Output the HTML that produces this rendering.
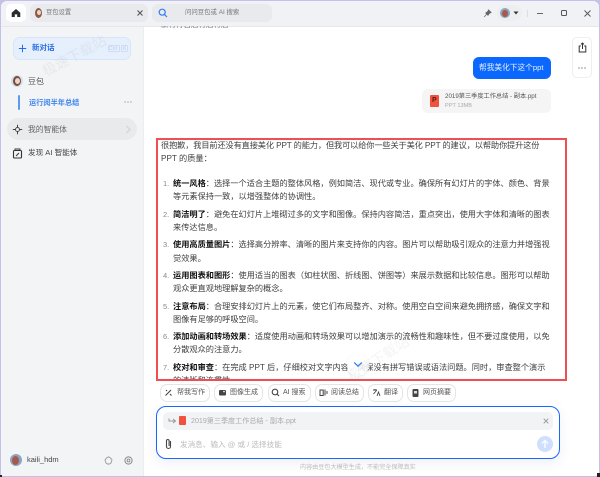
<!DOCTYPE html>
<html lang="zh">
<head>
<meta charset="utf-8">
<style>
html,body{margin:0;padding:0;width:600px;height:477px;overflow:hidden;background:#c3c1ea}
body{font-family:"Liberation Sans","Noto Sans CJK SC",sans-serif;position:relative}
#all{left:0;top:0;width:600px;height:477px;filter:blur(.3px)}
div,span,svg{position:absolute;box-sizing:border-box}
.t{white-space:nowrap;line-height:12px;font-size:8.2px;color:#3f3f3f}
.b{font-weight:700;color:#111;position:static}
.n{color:#888;font-size:7.5px}
.chip{top:384px;height:18px;border:1px solid #e4e5e8;border-radius:7px;background:#fff}
.chip span{white-space:nowrap;font-size:7px;line-height:16px;color:#555;top:0}
</style>
</head>
<body>
<div id="all">
<div id="win" style="left:1px;top:1px;width:598px;height:475px;background:#fff;border-radius:6px 6px 4px 0;overflow:hidden">
  <div style="left:0;top:0;width:598px;height:26px;background:#f1f2f5;border-bottom:1px solid #e6e7ea"></div>
  <div style="left:0;top:26px;width:143px;height:449px;background:#f3f4f6;border-right:1px solid #eceded"></div>
</div>

<!-- top bar items -->
<div style="left:6px;top:4px;width:20px;height:18px;background:#fff;border-radius:5px"></div>
<svg style="left:11px;top:8px" width="10" height="10" viewBox="0 0 10 10"><path d="M5 1 L9.3 4.8 V9 H6.2 V6.4 H3.8 V9 H.7 V4.8Z" fill="#2b2b2b"/></svg>
<div style="left:30px;top:4px;width:118px;height:18px;background:#e9eaed;border-radius:6px"></div>
<div style="left:35px;top:8px;width:7px;height:10px;border-radius:50%;background:#8a5a48"></div>
<div style="left:36.5px;top:10px;width:4px;height:5px;border-radius:50%;background:#f0d5c5"></div>
<div class="t" style="left:46px;top:7px;font-size:6.3px;color:#777">豆包设置</div>
<svg style="left:137px;top:10px" width="6" height="6" viewBox="0 0 6 6"><path d="M.5 .5 5.5 5.5M5.5 .5 .5 5.5" stroke="#555" stroke-width="1.1"/></svg>
<div style="left:152px;top:4px;width:120px;height:18px;background:#e9eaed;border-radius:6px"></div>
<svg style="left:158px;top:8px" width="10" height="10" viewBox="0 0 10 10"><circle cx="4.2" cy="4.2" r="3" fill="none" stroke="#2f7bf0" stroke-width="1.2"/><path d="M6.4 6.4 9 9" stroke="#2f7bf0" stroke-width="1.2"/></svg>
<div class="t" style="left:185px;top:7px;font-size:6.4px;color:#777">问问豆包或 AI 搜索</div>

<svg style="left:483px;top:9px" width="9" height="9" viewBox="0 0 9 9"><path d="M5.5 .8 8.2 3.5 6.6 4.2 5 6.4 2.6 4 4.8 2.4ZM3.6 5.4 1 8" fill="#666" stroke="#666" stroke-width=".7"/></svg>
<div style="left:497px;top:5px;width:25px;height:16px;background:#eceef0;border-radius:8px"></div>
<div style="left:500px;top:8px;width:10px;height:10px;border-radius:50%;background:#8aa6c0"></div>
<div style="left:502px;top:10px;width:6px;height:7px;border-radius:50%;background:#a8584c"></div>
<svg style="left:513px;top:11px" width="6" height="4" viewBox="0 0 6 4"><path d="M.5 .5H5.5L3 3.5Z" fill="#333"/></svg>
<div style="left:527px;top:10px;width:1px;height:7px;background:#dcdde0"></div>
<div style="left:537px;top:13px;width:6px;height:1px;background:#666"></div>
<div style="left:561px;top:10px;width:6px;height:6px;border:1px solid #555;border-radius:1.5px"></div>
<svg style="left:584px;top:10px" width="7" height="7" viewBox="0 0 7 7"><path d="M.5 .5 6.5 6.5M6.5 .5 .5 6.5" stroke="#555" stroke-width=".9"/></svg>

<!-- sidebar content -->
<div style="left:13px;top:37px;width:118px;height:23px;background:#e6effc;border:1px solid #d7e5fb;border-radius:7px"></div>
<svg style="left:18px;top:44px" width="9" height="9" viewBox="0 0 9 9"><path d="M4.5 .8V8.2M.8 4.5H8.2" stroke="#1f6cf0" stroke-width="1"/></svg>
<div class="t" style="left:32px;top:42px;font-weight:700;color:#2a6fe6;font-size:7.5px">新对话</div>
<div style="left:108px;top:45px;width:12px;height:7px;border:1px solid #cfdcf3;border-radius:1.5px"></div>
<div style="left:121px;top:45px;width:7px;height:7px;border:1px solid #cfdcf3;border-radius:1.5px"></div>
<div class="t" style="left:109px;top:43px;font-size:5px;color:#b9cdf0;letter-spacing:.2px">Ctrl</div>
<div class="t" style="left:123px;top:43px;font-size:5px;color:#b9cdf0">K</div>
<div class="t" style="left:40px;top:66px;font-size:14px;line-height:14px;color:rgba(160,165,180,.14);transform:rotate(-28deg);transform-origin:left top">极速下载站</div>

<div style="left:11px;top:75px;width:12px;height:12px;border-radius:50%;background:#cfe0f0"></div>
<div style="left:13px;top:76px;width:8px;height:10px;border-radius:50%;background:#7a4a38"></div>
<div style="left:14.5px;top:78px;width:5px;height:6px;border-radius:50%;background:#f0d5c5"></div>
<div class="t" style="left:28px;top:76px;color:#555;font-size:8px">豆包</div>
<div style="left:18px;top:95px;width:2px;height:15px;background:#5b9bf5;border-radius:1px"></div>
<div class="t" style="left:29px;top:97px;font-weight:700;color:#3f86ee;font-size:7.2px">运行阅半年总结</div>
<svg style="left:124px;top:101px" width="8" height="2" viewBox="0 0 8 2"><circle cx="1" cy="1" r=".6" fill="#888"/><circle cx="4" cy="1" r=".6" fill="#888"/><circle cx="7" cy="1" r=".6" fill="#888"/></svg>

<div style="left:7px;top:118px;width:130px;height:22px;background:#e9eaec;border-radius:11px"></div>
<svg style="left:12px;top:124px" width="11" height="11" viewBox="0 0 11 11"><path d="M5.5 .8V3.5M5.5 7.5V10.2M.8 5.5H3.5M7.5 5.5H10.2" stroke="#444" stroke-width="1"/><circle cx="5.5" cy="5.5" r="2" fill="none" stroke="#444" stroke-width=".9"/></svg>
<div class="t" style="left:28px;top:124px;font-size:7.8px;color:#666">我的智能体</div>
<svg style="left:125px;top:125px" width="6" height="9" viewBox="0 0 6 9"><path d="M1.5 1 5 4.5 1.5 8" fill="none" stroke="#cfd0d3" stroke-width="1"/></svg>
<svg style="left:12px;top:148px" width="11" height="11" viewBox="0 0 11 11"><rect x="1.5" y="2.5" width="8" height="7.5" rx="1" fill="none" stroke="#333" stroke-width="1.1"/><path d="M3 2.5V1H8V2.5" fill="none" stroke="#333" stroke-width=".9"/><path d="M4 8 7 5" stroke="#333" stroke-width="1"/></svg>
<div class="t" style="left:28px;top:147px;font-size:7.6px;color:#444">发现 AI 智能体</div>

<div style="left:10px;top:454px;width:12px;height:12px;border-radius:50%;background:#8aa6c0"></div>
<div style="left:12px;top:456px;width:7px;height:9px;border-radius:50%;background:#a8584c"></div>
<div class="t" style="left:27px;top:454px;font-size:7.5px;color:#444">kaili_hdm</div>
<svg style="left:104px;top:456px" width="9" height="9" viewBox="0 0 9 9"><path d="M4.5 .8 6.5 2 8 4 7 7 5.5 8H3.5L2 7 1 4 2.5 2Z" fill="none" stroke="#999" stroke-width=".9"/></svg>
<svg style="left:124px;top:456px" width="9" height="9" viewBox="0 0 9 9"><circle cx="4.5" cy="4.5" r="3.6" fill="none" stroke="#888" stroke-width="1"/><circle cx="4.5" cy="4.5" r="1.4" fill="none" stroke="#888" stroke-width=".9"/></svg>

<!-- main: top cut text -->
<div style="left:156px;top:26px;width:90px;height:4px;overflow:hidden"><div class="t" style="left:5px;top:-7px;color:#777;font-size:7.5px">新行行首后行后行后</div></div>

<!-- right float panel -->
<div style="left:572px;top:37px;width:20px;height:41px;background:#fff;border:1px solid #eeeeef;border-radius:5px"></div>
<svg style="left:578px;top:42px" width="9" height="11" viewBox="0 0 9 11"><path d="M2.8 4H1.2V10H7.8V4H6.2M4.5 7V1M3 2.4 4.5 1 6 2.4" fill="none" stroke="#333" stroke-width="1"/></svg>
<svg style="left:578px;top:67px" width="8" height="2" viewBox="0 0 8 2"><circle cx="1" cy="1" r=".6" fill="#555"/><circle cx="4" cy="1" r=".6" fill="#555"/><circle cx="7" cy="1" r=".6" fill="#555"/></svg>

<!-- bubble -->
<div style="left:473px;top:57px;width:78px;height:22px;background:#0a68ff;border-radius:6px"></div>
<div class="t" style="left:479px;top:62px;color:#e8f0ff;font-size:7.7px">帮我美化下这个ppt</div>

<!-- file card -->
<div style="left:422px;top:89px;width:129px;height:24px;background:#f5f5f6;border-radius:6px"></div>
<div style="left:430px;top:95px;width:9px;height:12px;background:#f0523d;border-radius:1px"></div>
<div class="t" style="left:432px;top:95px;font-size:7px;font-weight:700;color:#5a1a10">P</div>
<div class="t" style="left:445px;top:91px;font-size:6.2px;color:#555">2019第三季度工作总结 - 副本.ppt</div>
<div class="t" style="left:445px;top:100px;font-size:5.6px;color:#aaa">PPT 13MB</div>

<!-- answer -->
<div class="t" style="left:161px;top:140px;letter-spacing:-.12px">很抱歉，我目前还没有直接美化 PPT 的能力，但我可以给你一些关于美化 PPT 的建议，以帮助你提升这份</div>
<div class="t" style="left:161px;top:153px">PPT 的质量：</div>

<div class="t n" style="left:163px;top:178px">1.</div>
<div class="t" style="left:173px;top:178px"><span class="b">统一风格</span>：选择一个适合主题的整体风格，例如简洁、现代或专业。确保所有幻灯片的字体、颜色、背景</div>
<div class="t" style="left:173px;top:191px">等元素保持一致，以增强整体的协调性。</div>

<div class="t n" style="left:163px;top:209px">2.</div>
<div class="t" style="left:173px;top:209px"><span class="b">简洁明了</span>：避免在幻灯片上堆砌过多的文字和图像。保持内容简洁，重点突出，使用大字体和清晰的图表</div>
<div class="t" style="left:173px;top:222px">来传达信息。</div>

<div class="t n" style="left:163px;top:239px">3.</div>
<div class="t" style="left:173px;top:239px"><span class="b">使用高质量图片</span>：选择高分辨率、清晰的图片来支持你的内容。图片可以帮助吸引观众的注意力并增强视</div>
<div class="t" style="left:173px;top:253px">觉效果。</div>

<div class="t n" style="left:163px;top:270px">4.</div>
<div class="t" style="left:173px;top:270px"><span class="b">运用图表和图形</span>：使用适当的图表（如柱状图、折线图、饼图等）来展示数据和比较信息。图形可以帮助</div>
<div class="t" style="left:173px;top:283px">观众更直观地理解复杂的概念。</div>

<div class="t n" style="left:163px;top:301px">5.</div>
<div class="t" style="left:173px;top:301px"><span class="b">注意布局</span>：合理安排幻灯片上的元素，使它们布局整齐、对称。使用空白空间来避免拥挤感，确保文字和</div>
<div class="t" style="left:173px;top:314px">图像有足够的呼吸空间。</div>

<div class="t n" style="left:163px;top:331px">6.</div>
<div class="t" style="left:173px;top:331px"><span class="b">添加动画和转场效果</span>：适度使用动画和转场效果可以增加演示的流畅性和趣味性，但不要过度使用，以免</div>
<div class="t" style="left:173px;top:344px">分散观众的注意力。</div>

<div class="t n" style="left:163px;top:362px">7.</div>
<div class="t" style="left:173px;top:362px"><span class="b">校对和审查</span>：在完成 PPT 后，仔细校对文字内容，确保没有拼写错误或语法问题。同时，审查整个演示</div>
<div style="left:173px;top:375px;width:200px;height:4px;overflow:hidden"><div class="t" style="left:0;top:0">的清晰和连贯性。</div></div>

<!-- scroll down button -->
<div style="left:347px;top:354px;width:22px;height:22px;border-radius:50%;background:rgba(255,255,255,.88);box-shadow:0 1px 4px rgba(0,0,0,.06)"></div>
<svg style="left:353px;top:361px" width="10" height="7" viewBox="0 0 10 7"><path d="M1.2 1.5 5 5.2 8.8 1.5" fill="none" stroke="#2a72ee" stroke-width="1.2"/></svg>
<div class="t" style="left:345px;top:372px;font-size:14px;line-height:14px;color:rgba(160,165,180,.12);transform:rotate(-33deg);transform-origin:left top">极速下载站</div>

<!-- red box -->
<div style="left:156px;top:138px;width:411px;height:243px;border:2px solid #ee4f53"></div>

<!-- chips -->
<div class="chip" style="left:160px;width:50px"><span style="left:16px">帮我写作</span></div>
<svg style="left:164px;top:388px" width="9" height="9" viewBox="0 0 9 9"><path d="M1.5 7.5 7 2M2 2 3 3M6 6 7.5 7.5" stroke="#444" stroke-width="1.1"/></svg>
<div class="chip" style="left:214px;width:49px"><span style="left:15px">图像生成</span></div>
<svg style="left:218px;top:388px" width="9" height="9" viewBox="0 0 9 9"><rect x="1" y="2" width="7" height="5.5" rx="1" fill="#444"/><circle cx="6" cy="3.6" r=".8" fill="#fff"/></svg>
<div class="chip" style="left:268px;width:43px"><span style="left:14px">AI 搜索</span></div>
<svg style="left:271px;top:388px" width="9" height="9" viewBox="0 0 9 9"><circle cx="4" cy="4" r="2.8" fill="none" stroke="#444" stroke-width="1.1"/><path d="M6 6 8 8" stroke="#444" stroke-width="1.1"/></svg>
<div class="chip" style="left:315px;width:49px"><span style="left:15px">阅读总结</span></div>
<svg style="left:319px;top:388px" width="9" height="9" viewBox="0 0 9 9"><rect x="1" y="2" width="3.2" height="5.5" fill="none" stroke="#444"/><path d="M6 1.5V7.5M8 3V6" stroke="#444"/></svg>
<div class="chip" style="left:368px;width:35px"><span style="left:15px">翻译</span></div>
<svg style="left:372px;top:388px" width="9" height="9" viewBox="0 0 9 9"><path d="M1 2H5M3 1V2.5M1.5 6 4.5 2.5M5 8 6.5 4 8 8" fill="none" stroke="#444" stroke-width=".9"/></svg>
<div class="chip" style="left:407px;width:49px"><span style="left:15px">网页摘要</span></div>
<svg style="left:411px;top:388px" width="9" height="10" viewBox="0 0 9 10"><rect x="1.5" y="1" width="6" height="8" rx="1" fill="#444"/><rect x="3" y="3" width="3" height="2.5" fill="#ddd"/></svg>

<!-- input -->
<div style="left:156px;top:406px;width:404px;height:53px;background:#fff;border:1px solid #1a66ff;border-radius:10px;box-shadow:0 4px 12px rgba(40,70,160,.08)"></div>
<div style="left:163px;top:412px;width:390px;height:18px;background:#f2f3f5;border-radius:5px"></div>
<svg style="left:168px;top:417px" width="9" height="8" viewBox="0 0 9 8"><path d="M1 1.5V4H7M5 2 7.5 4 5 6" fill="none" stroke="#999" stroke-width="1"/></svg>
<div style="left:179px;top:416px;width:7px;height:9px;background:#f0523d;border-radius:1px"></div>
<div class="t" style="left:191px;top:415px;font-size:7.1px;color:#aaa">2019第三季度工作总结 - 副本.ppt</div>
<svg style="left:543px;top:418px" width="6" height="6" viewBox="0 0 6 6"><path d="M.7 .7 5.3 5.3M5.3 .7 .7 5.3" stroke="#999" stroke-width="1"/></svg>
<svg style="left:164px;top:438px" width="9" height="12" viewBox="0 0 9 12"><path d="M6.5 3V8.5A2 2 0 0 1 2.5 8.5V2.8A1.3 1.3 0 0 1 5.1 2.8V8" fill="none" stroke="#444" stroke-width="1.1"/></svg>
<div class="t" style="left:180px;top:439px;font-size:7.6px;color:#bbb">发消息、输入 @ 或 / 选择技能</div>
<div style="left:537px;top:436px;width:16px;height:16px;border-radius:50%;background:#cfe0ff"></div>
<svg style="left:541px;top:439px" width="8" height="10" viewBox="0 0 8 10"><path d="M4 9V1.5M1 4.5 4 1.5 7 4.5" fill="none" stroke="#fff" stroke-width="1.2"/></svg>

<div class="t" style="left:300px;top:462px;font-size:6.1px;color:#bbb">内容由豆包大模型生成，不能完全保障真实</div>

<!-- dark corner -->
<div style="left:597px;top:473px;width:3px;height:4px;background:#222"></div>
<div style="left:0;top:475px;width:2px;height:2px;background:#222"></div>
</div>
</body>
</html>
